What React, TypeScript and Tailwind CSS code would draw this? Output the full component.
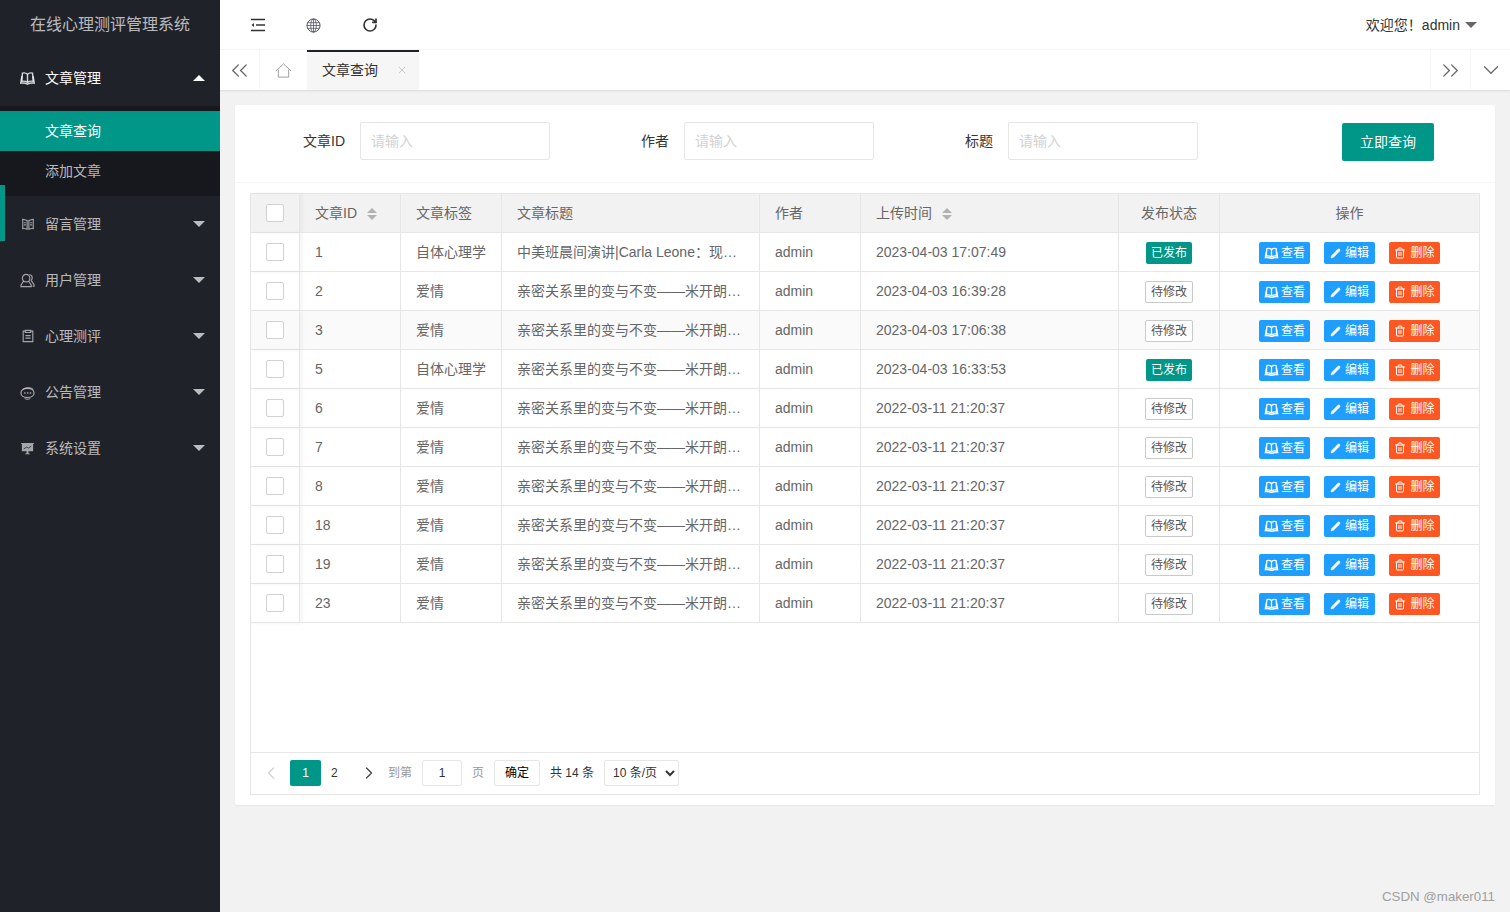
import { useState } from "react"
import { ChevronDown, ChevronLeft, ChevronRight, ChevronsLeft, ChevronsRight, Pencil, RotateCw, Trash2, X } from "lucide-react"

const font = "font-['Liberation_Sans','Noto_Sans_CJK_SC',sans-serif]"

const BookIcon = ({ className = "" }: { className?: string }) => (
  <svg viewBox="0 0 16 14" className={className} fill="none" stroke="currentColor" strokeWidth="1.5">
    <path d="M8 3C6.8 1.800 4.600 1.300 2.600 1.800L2 10.500c2-.4 4.400 0 6 1.200 1.600-1.200 4-1.600 6-1.200l-.6-8.700C11.400 1.300 9.200 1.800 8 3z" />
    <path d="M8 3v8.700M2 5 .8 12.500c2.400-.5 5.200 0 7.200 1 2-1 4.800-1.500 7.200-1L14 5" />
  </svg>
)

const LogIcon = () => (
  <svg viewBox="0 0 16 16" className="h-[14px] w-[14px]" fill="none" stroke="currentColor" strokeWidth="1.300">
    <path d="M2 2v12M14 2v12M2 2.500 7 4v10l-5-1.500zM14 2.500 9 4v10l5-1.500z" />
    <path d="M10.500 6.500h2M10.500 9h2M3.500 6.500h2M3.500 9h2" strokeWidth="1.200" />
  </svg>
)

const UserIcon = () => (
  <svg viewBox="0 0 16 16" className="h-[15px] w-[15px]" fill="none" stroke="currentColor" strokeWidth="1.200">
    <circle cx="6.500" cy="5.500" r="4" />
    <path d="M3.800 8.500 1 13v1.500h11V13L9.200 8.500M10 1.600c2.400.4 3.600 2.600 2.800 4.800-.2.6-.5 1-.9 1.400L15 12.500v1.500h-1.500" />
  </svg>
)

const ClipIcon = () => (
  <svg viewBox="0 0 16 16" className="h-[14px] w-[14px]" fill="none" stroke="currentColor" strokeWidth="1.300">
    <path d="M4.500 2.500H2.500v12h11v-12h-2" />
    <path d="M5 1.500h6v2.500H5zM5 7.500h6M5 10.500h6" />
  </svg>
)

const NoticeIcon = () => (
  <svg viewBox="0 0 16 16" className="h-[15px] w-[15px]" fill="none" stroke="currentColor" strokeWidth="1.300">
    <path d="M8 13.500C4 13.500 1 11.500 1 8.500s3-5 7-5 7 2 7 5-3 5-7 5z" />
    <path d="M3 5c2-2.600 8-3 11-.5M5 14.500c2 1 4 1 6 0" strokeWidth="1" />
    <path d="M4.500 8.500h1.500M7.500 8.500h1.500M10.500 8.500h1.500" strokeWidth="1.600" />
  </svg>
)

const BoardIcon = () => (
  <svg viewBox="0 0 16 16" className="h-[15px] w-[15px]" fill="currentColor">
    <path d="M1 2h14v1h-1v8H9v1.500l2 1.500H5l2-1.500V11H2V3H1z" />
    <path d="M4 8.500 7 6.500l2 1 3-2" fill="none" stroke="#20222a" strokeWidth=".8" />
  </svg>
)

const GlobeIcon = () => (
  <svg viewBox="0 0 16 16" className="mt-px ml-10 h-[15px] w-[15px] text-[#4a4f5a]" fill="none" stroke="currentColor" strokeWidth=".8">
    <circle cx="8" cy="8" r="7" strokeWidth="1" />
    <ellipse cx="8" cy="8" rx="3" ry="7" />
    <path d="M8 1v14M1.800 5h12.400M1 8h14M1.800 11h12.400" />
  </svg>
)

const Caret = ({ up = false, className = "" }: { up?: boolean; className?: string }) => (
  <span
    className={`h-0 w-0 border-x-[6px] border-x-transparent ${up ? "border-b-[6px]" : "border-t-[6px]"} ${className}`}
  />
)

const menus = [
  { label: "留言管理", icon: <LogIcon /> },
  { label: "用户管理", icon: <UserIcon /> },
  { label: "心理测评", icon: <ClipIcon /> },
  { label: "公告管理", icon: <NoticeIcon /> },
  { label: "系统设置", icon: <BoardIcon /> },
]

function Sidebar() {
  return (
    <aside className="relative flex w-[220px] shrink-0 flex-col bg-[#20222a] text-sm">
      <div className="flex h-[50px] items-center justify-center text-base text-white/70">在线心理测评管理系统</div>
      <div className="flex h-14 items-center pr-[15px] pl-5 text-white">
        <BookIcon className="h-[14px] w-[15px] text-white/80" />
        <span className="ml-[10px] flex-1">文章管理</span>
        <Caret up className="border-b-white" />
      </div>
      <div className="h-[90px] bg-[#17181e] py-[5px]">
        <div className="flex h-10 items-center bg-[#009688] pl-[45px] text-white">文章查询</div>
        <div className="flex h-10 items-center pl-[45px] text-white/70">添加文章</div>
      </div>
      {menus.map((m) => (
        <div key={m.label} className="flex h-14 items-center pr-[15px] pl-5 text-white/70">
          <span className="flex w-[15px] justify-center text-white/60">{m.icon}</span>
          <span className="ml-[10px] flex-1">{m.label}</span>
          <Caret className="border-t-white/70" />
        </div>
      ))}
      <span className="absolute top-[185px] left-0 h-14 w-[5px] bg-[#009688]" />
    </aside>
  )
}

function TopBar() {
  return (
    <header className="flex h-[50px] shrink-0 items-center border-b border-[#f6f6f6] bg-white pr-[33px] pl-[30px] text-[#333]">
      <svg viewBox="0 0 16 16" className="mt-px h-4 w-4" fill="none" stroke="currentColor" strokeWidth="1.400">
        <path d="M1 2.500h14M6 8h9M1 13.500h14" />
        <path d="M4 6 1.500 8 4 10z" fill="currentColor" stroke="none" />
      </svg>
      <GlobeIcon />
      <RotateCw className="mt-px ml-[41px] h-4 w-4" strokeWidth={2.500} />
      <span className="ml-auto text-sm text-[#333]">欢迎您！admin</span>
      <Caret className="ml-[5px] border-t-[#666]" />
    </header>
  )
}

function TabBar() {
  return (
    <div className="flex h-10 shrink-0 items-stretch bg-white shadow-[0_1px_2px_rgba(0,0,0,0.1)]">
      <div className="flex w-10 items-center justify-center border-r border-[#f6f6f6] text-[#666]">
        <ChevronsLeft className="h-[27px] w-[27px]" strokeWidth={1.200} />
      </div>
      <div className="flex w-[47px] items-center justify-center text-[#999]">
        <svg viewBox="0 0 18 18" className="h-[17px] w-[17px]" fill="none" stroke="currentColor" strokeWidth="1">
          <path d="M1 9.500 9 2l8 7.500M3.500 8v8h11V8" />
        </svg>
      </div>
      <div className="flex w-[112px] items-center border-t-2 border-[#20222a] bg-[#f6f6f6] pr-[11px] pb-[2px] pl-[15px] text-sm text-[#333]">
        <span className="flex-1">文章查询</span>
        <X className="h-3 w-3 text-[#bbb]" strokeWidth={1.500} />
      </div>
      <div className="flex-1" />
      <div className="flex w-10 items-center justify-center border-l border-[#f6f6f6] text-[#666]">
        <ChevronsRight className="h-[27px] w-[27px]" strokeWidth={1.200} />
      </div>
      <div className="flex w-10 items-center justify-center border-l border-[#f6f6f6] text-[#666]">
        <ChevronDown className="h-[26px] w-[26px]" strokeWidth={1.100} />
      </div>
    </div>
  )
}

function Field({ label, labelWidth }: { label: string; labelWidth: string }) {
  const [value, setValue] = useState("")
  return (
    <>
      <label className={`${labelWidth} text-right text-sm text-[#333]`}>{label}</label>
      <input
        value={value}
        onChange={(e) => setValue(e.target.value)}
        placeholder="请输入"
        className="ml-[15px] h-[38px] w-[190px] rounded-[2px] border border-[#e6e6e6] bg-white pl-[10px] text-sm outline-none placeholder:text-[#d2d2d2]"
      />
    </>
  )
}

const Checkbox = () => (
  <span className="mx-auto block h-[18px] w-[18px] rounded-[2px] border border-[#d2d2d2] bg-white" />
)

const Sort = () => (
  <span className="ml-[10px] inline-flex flex-col gap-[2px] align-middle">
    <span className="h-0 w-0 border-x-[5px] border-b-[5px] border-x-transparent border-b-[#b2b2b2]" />
    <span className="h-0 w-0 border-x-[5px] border-t-[5px] border-x-transparent border-t-[#b2b2b2]" />
  </span>
)

type Row = { id: number; tag: string; title: string; time: string; published: boolean }

const love = "亲密关系里的变与不变——米开朗…"

const rows: Row[] = [
  { id: 1, tag: "自体心理学", title: "中美班晨间演讲|Carla Leone：现…", time: "2023-04-03 17:07:49", published: true },
  { id: 2, tag: "爱情", title: love, time: "2023-04-03 16:39:28", published: false },
  { id: 3, tag: "爱情", title: love, time: "2023-04-03 17:06:38", published: false },
  { id: 5, tag: "自体心理学", title: love, time: "2023-04-03 16:33:53", published: true },
  { id: 6, tag: "爱情", title: love, time: "2022-03-11 21:20:37", published: false },
  { id: 7, tag: "爱情", title: love, time: "2022-03-11 21:20:37", published: false },
  { id: 8, tag: "爱情", title: love, time: "2022-03-11 21:20:37", published: false },
  { id: 18, tag: "爱情", title: love, time: "2022-03-11 21:20:37", published: false },
  { id: 19, tag: "爱情", title: love, time: "2022-03-11 21:20:37", published: false },
  { id: 23, tag: "爱情", title: love, time: "2022-03-11 21:20:37", published: false },
]

const th = "h-[39px] border-r border-b border-[#e6e6e6] px-[15px] text-sm font-normal text-[#666]"
const td = "h-[39px] whitespace-nowrap border-r border-b border-[#e6e6e6] px-[15px] text-sm text-[#666]"
const action = "flex h-[22px] w-[51px] items-center justify-center rounded-[2px] text-xs text-white"

function ArticleTable() {
  return (
    <div className="h-[558px] bg-white">
      <table className="w-[1228px] table-fixed border-separate border-spacing-0">
        <colgroup>
          <col className="w-[49px]" />
          <col className="w-[101px]" />
          <col className="w-[101px]" />
          <col className="w-[258px]" />
          <col className="w-[101px]" />
          <col className="w-[258px]" />
          <col className="w-[101px]" />
          <col className="w-[259px]" />
        </colgroup>
        <thead className="bg-[#f2f2f2]">
          <tr>
            <th className={`${th} shadow-[2px_0_4px_rgba(0,0,0,0.05)]`}><Checkbox /></th>
            <th className={`${th} text-left`}>文章ID<Sort /></th>
            <th className={`${th} text-left`}>文章标签</th>
            <th className={`${th} text-left`}>文章标题</th>
            <th className={`${th} text-left`}>作者</th>
            <th className={`${th} text-left`}>上传时间<Sort /></th>
            <th className={`${th} text-center`}>发布状态</th>
            <th className={`${th} border-r-0 text-center`}>操作</th>
          </tr>
        </thead>
        <tbody>
          {rows.map((r) => (
            <tr key={r.id} className={r.id === 3 ? "bg-[#fafafa]" : ""}>
              <td className={`${td} shadow-[2px_0_4px_rgba(0,0,0,0.05)]`}><Checkbox /></td>
              <td className={td}>{r.id}</td>
              <td className={td}>{r.tag}</td>
              <td className={td}>{r.title}</td>
              <td className={td}>admin</td>
              <td className={td}>{r.time}</td>
              <td className={`${td} pt-[2px] text-center`}>
                {r.published ? (
                  <span className="inline-flex h-[22px] w-[46px] items-center justify-center rounded-[2px] bg-[#009688] align-top text-xs text-white">已发布</span>
                ) : (
                  <span className="inline-flex h-[22px] w-[48px] items-center justify-center rounded-[2px] border border-[#c9c9c9] bg-white align-top text-xs text-[#555]">待修改</span>
                )}
              </td>
              <td className={`${td} border-r-0 pt-[2px]`}>
                <div className="flex justify-center gap-[14px]">
                  <span className={`${action} gap-[2px] bg-[#1e9fff]`}><BookIcon className="h-3 w-[15px]" />查看</span>
                  <span className={`${action} gap-[4px] bg-[#1e9fff]`}><Pencil className="h-[11px] w-[11px]" fill="currentColor" strokeWidth={1} />编辑</span>
                  <span className={`${action} gap-[4px] bg-[#ff5722]`}><Trash2 className="h-3 w-3" />删除</span>
                </div>
              </td>
            </tr>
          ))}
        </tbody>
      </table>
    </div>
  )
}

function Pager() {
  return (
    <div className="flex h-[42px] items-center border-t border-[#e6e6e6] pb-[2px] pl-[10px] text-xs text-[#333]">
      <ChevronLeft className="h-5 w-5 text-[#d2d2d2]" strokeWidth={1.500} />
      <span className="ml-[9px] flex h-[26px] w-[31px] items-center justify-center rounded-[2px] bg-[#009688] text-white">1</span>
      <span className="ml-[10px] w-[8px]">2</span>
      <ChevronRight className="ml-5 h-5 w-5 text-[#444]" strokeWidth={1.500} />
      <span className="ml-[9px] text-[#999]">到第</span>
      <span className="ml-[10px] flex h-[26px] w-[40px] items-center justify-center rounded-[2px] border border-[#e6e6e6]">1</span>
      <span className="ml-[10px] text-[#999]">页</span>
      <span className="ml-[10px] flex h-[26px] w-[46px] items-center justify-center rounded-[2px] border border-[#e6e6e6] pt-px text-black">确定</span>
      <span className="ml-[10px]">共 14 条</span>
      <select defaultValue="10" className="ml-[10px] h-[26px] w-[75px] rounded-[2px] border border-[#e6e6e6] bg-white pl-[4px] text-xs text-[#333]">
        <option value="10">10 条/页</option>
        <option value="20">20 条/页</option>
        <option value="30">30 条/页</option>
      </select>
    </div>
  )
}

export default function App() {
  return (
    <div className={`${font} relative flex h-[912px] overflow-hidden bg-[#f2f2f2]`}>
      <Sidebar />
      <main className="flex min-w-0 flex-1 flex-col">
        <TopBar />
        <TabBar />
        <section className="mx-[15px] mt-[15px] rounded-[2px] bg-white shadow-[0_1px_2px_rgba(0,0,0,0.05)]">
          <form className="flex h-[78px] items-start border-b border-[#f6f6f6] pt-[17px]">
            <span className="flex h-[38px] items-center">
              <Field label="文章ID" labelWidth="w-[110px]" />
              <Field label="作者" labelWidth="w-[119px]" />
              <Field label="标题" labelWidth="w-[119px]" />
            </span>
            <button type="button" className="mt-px ml-[144px] h-[38px] w-[92px] rounded-[2px] bg-[#009688] text-sm text-white">立即查询</button>
          </form>
          <div className="px-[15px] pt-[10px] pb-[10px]">
            <div className="border border-[#e6e6e6]">
              <ArticleTable />
              <Pager />
            </div>
          </div>
        </section>
      </main>
      <span className="absolute right-[15px] bottom-[5px] text-[13.3px] text-[#a0a0a0]">CSDN @maker011</span>
    </div>
  )
}
